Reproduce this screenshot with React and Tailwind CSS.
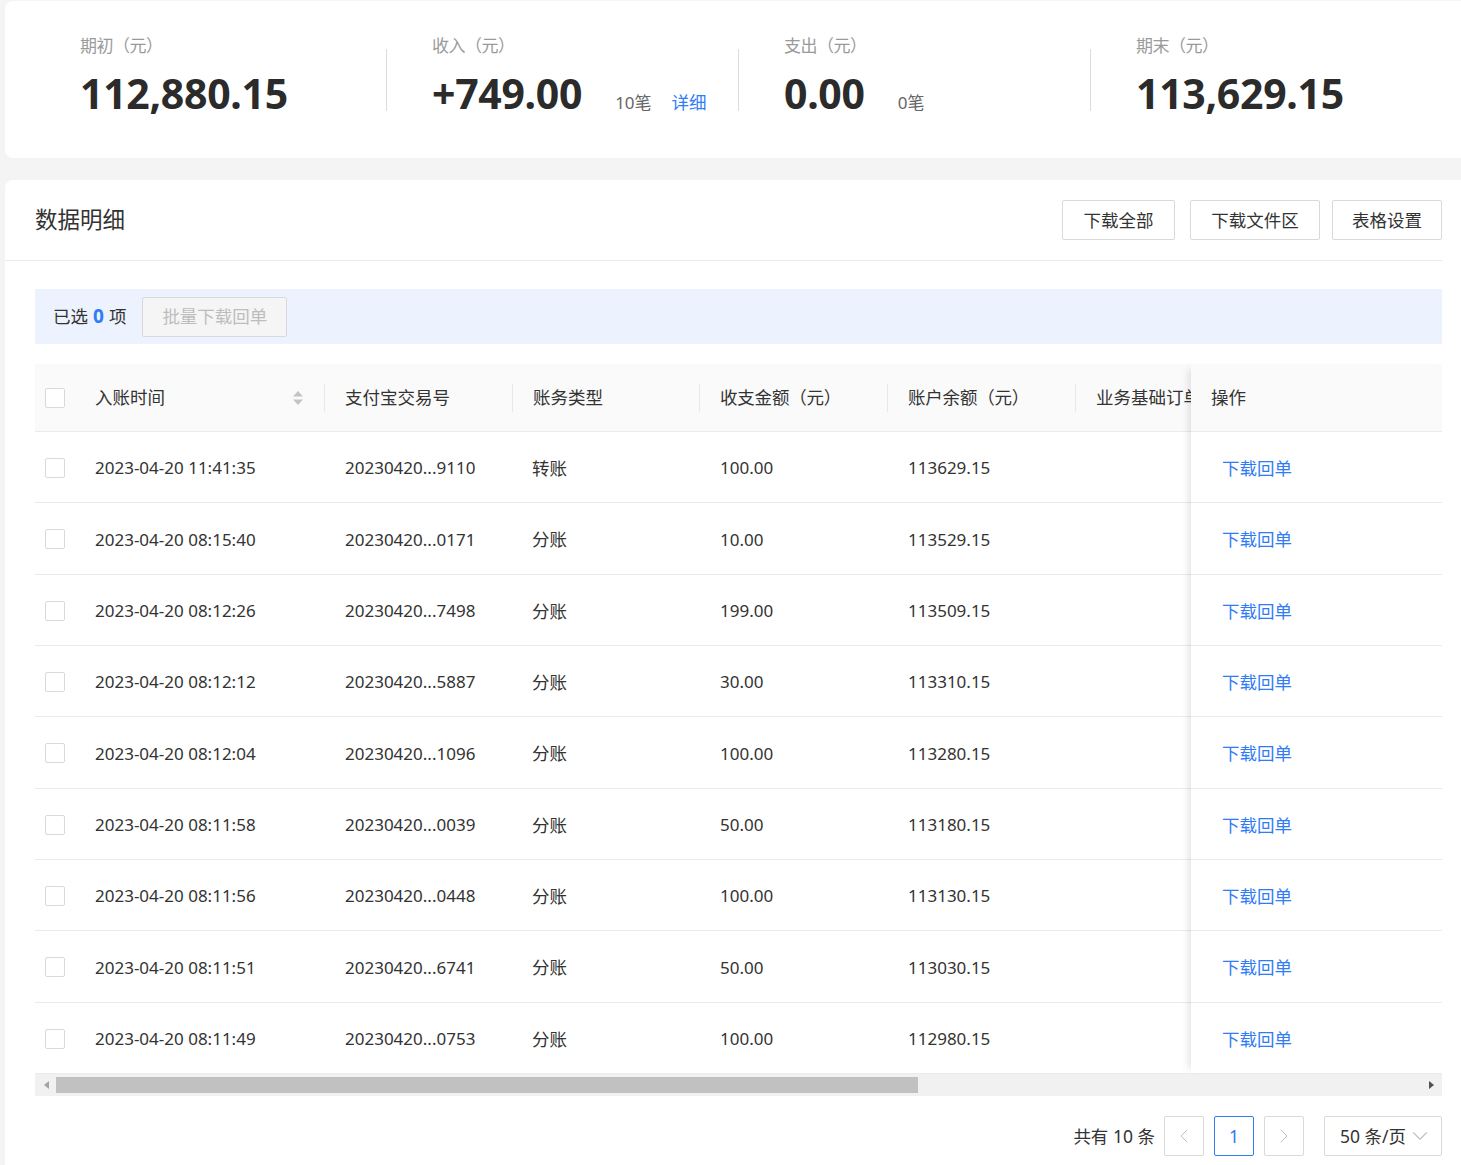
import { ChevronDown, ChevronLeft, ChevronRight } from 'lucide-react';

const rows = [
  ['2023-04-20 11:41:35', '20230420...9110', '转账', '100.00', '113629.15'],
  ['2023-04-20 08:15:40', '20230420...0171', '分账', '10.00', '113529.15'],
  ['2023-04-20 08:12:26', '20230420...7498', '分账', '199.00', '113509.15'],
  ['2023-04-20 08:12:12', '20230420...5887', '分账', '30.00', '113310.15'],
  ['2023-04-20 08:12:04', '20230420...1096', '分账', '100.00', '113280.15'],
  ['2023-04-20 08:11:58', '20230420...0039', '分账', '50.00', '113180.15'],
  ['2023-04-20 08:11:56', '20230420...0448', '分账', '100.00', '113130.15'],
  ['2023-04-20 08:11:51', '20230420...6741', '分账', '50.00', '113030.15'],
  ['2023-04-20 08:11:49', '20230420...0753', '分账', '100.00', '112980.15'],
];

const stats = [
  { label: '期初（元）', value: '112,880.15' },
  { label: '收入（元）', value: '+749.00', count: '10笔', link: '详细' },
  { label: '支出（元）', value: '0.00', count: '0笔' },
  { label: '期末（元）', value: '113,629.15' },
];

function Checkbox() {
  return <span className="block h-[20px] w-[20px] rounded-[2px] border border-[#d9d9d9] bg-white" />;
}

function HeadDivider() {
  return <span className="h-[28px] w-px bg-[#e8e8e8]" />;
}

function Button({ className, children }) {
  return (
    <button
      className={`h-[40px] rounded-[2px] border border-[#d9d9d9] bg-white text-center text-[17.5px] text-[#333] ${className}`}
    >
      {children}
    </button>
  );
}

export default function App() {
  return (
    <div className="h-[1165px] w-[1461px] overflow-hidden bg-[#f4f4f4] pl-[5px] pt-[1px] font-['Noto_Sans','Noto_Sans_CJK_SC',sans-serif] text-[#333]">
      {/* summary */}
      <div className="flex h-[157px] w-[1467px] rounded-lg bg-white pl-[29px]">
        {stats.map((s, i) => (
          <div key={s.label} className="flex w-[352px]">
            <span className={`mt-[48px] h-[62px] w-px ${i ? 'bg-[#dcdcdc]' : 'bg-transparent'}`} />
            <div className="pl-[45px] pt-[33px]">
              <p className="text-[17px] leading-[24px] tracking-[-0.5px] text-[#9a9a9a]">{s.label}</p>
              <div className="mt-[11px] flex items-baseline">
                <span className="text-[41px] font-bold leading-[48px] tracking-[-0.3px] text-[#2b2b2b]">{s.value}</span>
                {s.count && <span className="ml-[33px] text-[17px] text-[#666]">{s.count}</span>}
                {s.link && <span className="ml-[20px] text-[17.5px] text-[#2f7cf6]">{s.link}</span>}
              </div>
            </div>
          </div>
        ))}
      </div>

      {/* detail */}
      <div className="mt-[22px] h-[1000px] w-[1467px] rounded-lg bg-white">
        <div className="flex h-[81px] w-[1437px] items-center justify-between border-b border-[#ebebeb] pl-[30px]">
          <h2 className="text-[22.5px] text-[#333]">数据明细</h2>
          <div className="flex">
            <Button className="w-[113px]">下载全部</Button>
            <Button className="ml-[15px] w-[130px]">下载文件区</Button>
            <Button className="ml-[12px] w-[110px]">表格设置</Button>
          </div>
        </div>

        <div className="w-[1437px] pl-[30px] pt-[28px]">
          <div className="flex h-[55px] items-center bg-[#ecf3fe] pl-[18px] text-[17.5px]">
            <span className="flex items-center">
              已选<span className="mx-[5px] text-[19px] font-bold text-[#2f7cf6]">0</span>项
            </span>
            <span className="ml-[16px] flex h-[40px] items-center rounded-[2px] border border-[#d9d9d9] bg-[#f5f5f5] px-[19px] text-[#bdbdbd]">
              批量下载回单
            </span>
          </div>

          {/* table */}
          <div className="mt-[20px] flex">
            <div className="w-[1156px] overflow-hidden">
              <div className="w-[1400px]">
                <div className="flex h-[68px] items-center border-b border-[#ebebeb] bg-[#fafafa] text-[17.5px]">
                  <div className="w-[50px] pl-[10px]">
                    <Checkbox />
                  </div>
                  <div className="flex w-[239px] items-center justify-between pl-[10px] pr-[21px]">
                    <span>入账时间</span>
                    <svg width="10" height="14" viewBox="0 0 10 14" fill="#c4c4c4">
                      <path d="M5 0 L10 5.5 H0 Z" />
                      <path d="M5 14 L10 8.5 H0 Z" />
                    </svg>
                  </div>
                  <HeadDivider />
                  <div className="w-[187px] pl-[20px]">支付宝交易号</div>
                  <HeadDivider />
                  <div className="w-[186px] pl-[20px]">账务类型</div>
                  <HeadDivider />
                  <div className="w-[187px] pl-[20px] tracking-[-0.2px]">收支金额（元）</div>
                  <HeadDivider />
                  <div className="w-[187px] pl-[20px] tracking-[-0.2px]">账户余额（元）</div>
                  <HeadDivider />
                  <div className="w-[240px] whitespace-nowrap pl-[20px]">业务基础订单号</div>
                </div>
                {rows.map((r) => (
                  <div key={r[0]} className="flex h-[71.33px] items-center border-b border-[#ebebeb] pt-[2px] text-[17px]">
                    <div className="w-[50px] pl-[10px]">
                      <Checkbox />
                    </div>
                    <div className="w-[240px] pl-[10px]">{r[0]}</div>
                    <div className="w-[187px] pl-[20px]">{r[1]}</div>
                    <div className="w-[188px] pl-[20px] text-[17.5px]">{r[2]}</div>
                    <div className="w-[188px] pl-[20px]">{r[3]}</div>
                    <div className="w-[188px] pl-[20px]">{r[4]}</div>
                    <div className="w-[240px]" />
                  </div>
                ))}
              </div>
            </div>
            <div className="z-10 w-[251px] bg-white shadow-[-7px_0_8px_-5px_rgba(0,0,0,0.12)]">
              <div className="flex h-[68px] items-center border-b border-[#ebebeb] bg-[#fafafa] pl-[20px] text-[17.5px]">
                操作
              </div>
              {rows.map((r) => (
                <div
                  key={r[0]}
                  className="flex h-[71.33px] items-center border-b border-[#ebebeb] pl-[31px] pt-[2px] text-[17.5px] text-[#2f7cf6]"
                >
                  下载回单
                </div>
              ))}
            </div>
          </div>

          {/* scrollbar */}
          <div className="flex h-[22px] items-center bg-[#f1f1f1]">
            <svg className="ml-[8px]" width="6" height="8" viewBox="0 0 6 8" fill="#a3a3a3">
              <path d="M6 0 V8 L1 4 Z" />
            </svg>
            <span className="ml-[7px] h-[16px] w-[862px] bg-[#c1c1c1]" />
            <svg className="ml-auto mr-[7px]" width="6" height="8" viewBox="0 0 6 8" fill="#505050">
              <path d="M0 0 V8 L5 4 Z" />
            </svg>
          </div>

          {/* pagination */}
          <div className="mt-[20px] flex items-center justify-end text-[17.5px]">
            <span className="mr-[9px]">共有 10 条</span>
            <span className="flex h-[40px] w-[40px] items-center justify-center rounded-[2px] border border-[#d9d9d9] text-[#c0c0c0]">
              <ChevronLeft size={24} strokeWidth={1} />
            </span>
            <span className="ml-[10px] flex h-[40px] w-[40px] items-center justify-center rounded-[2px] border border-[#2f7cf6] text-[#2f7cf6]">
              1
            </span>
            <span className="ml-[10px] flex h-[40px] w-[40px] items-center justify-center rounded-[2px] border border-[#d9d9d9] text-[#c0c0c0]">
              <ChevronRight size={24} strokeWidth={1} />
            </span>
            <span className="ml-[20px] flex h-[40px] w-[118px] items-center justify-between rounded-[2px] border border-[#d9d9d9] pl-[15px] pr-[8px]">
              50 条/页
              <ChevronDown size={26} strokeWidth={1} className="text-[#c0c0c0]" />
            </span>
          </div>
        </div>
      </div>
    </div>
  );
}
